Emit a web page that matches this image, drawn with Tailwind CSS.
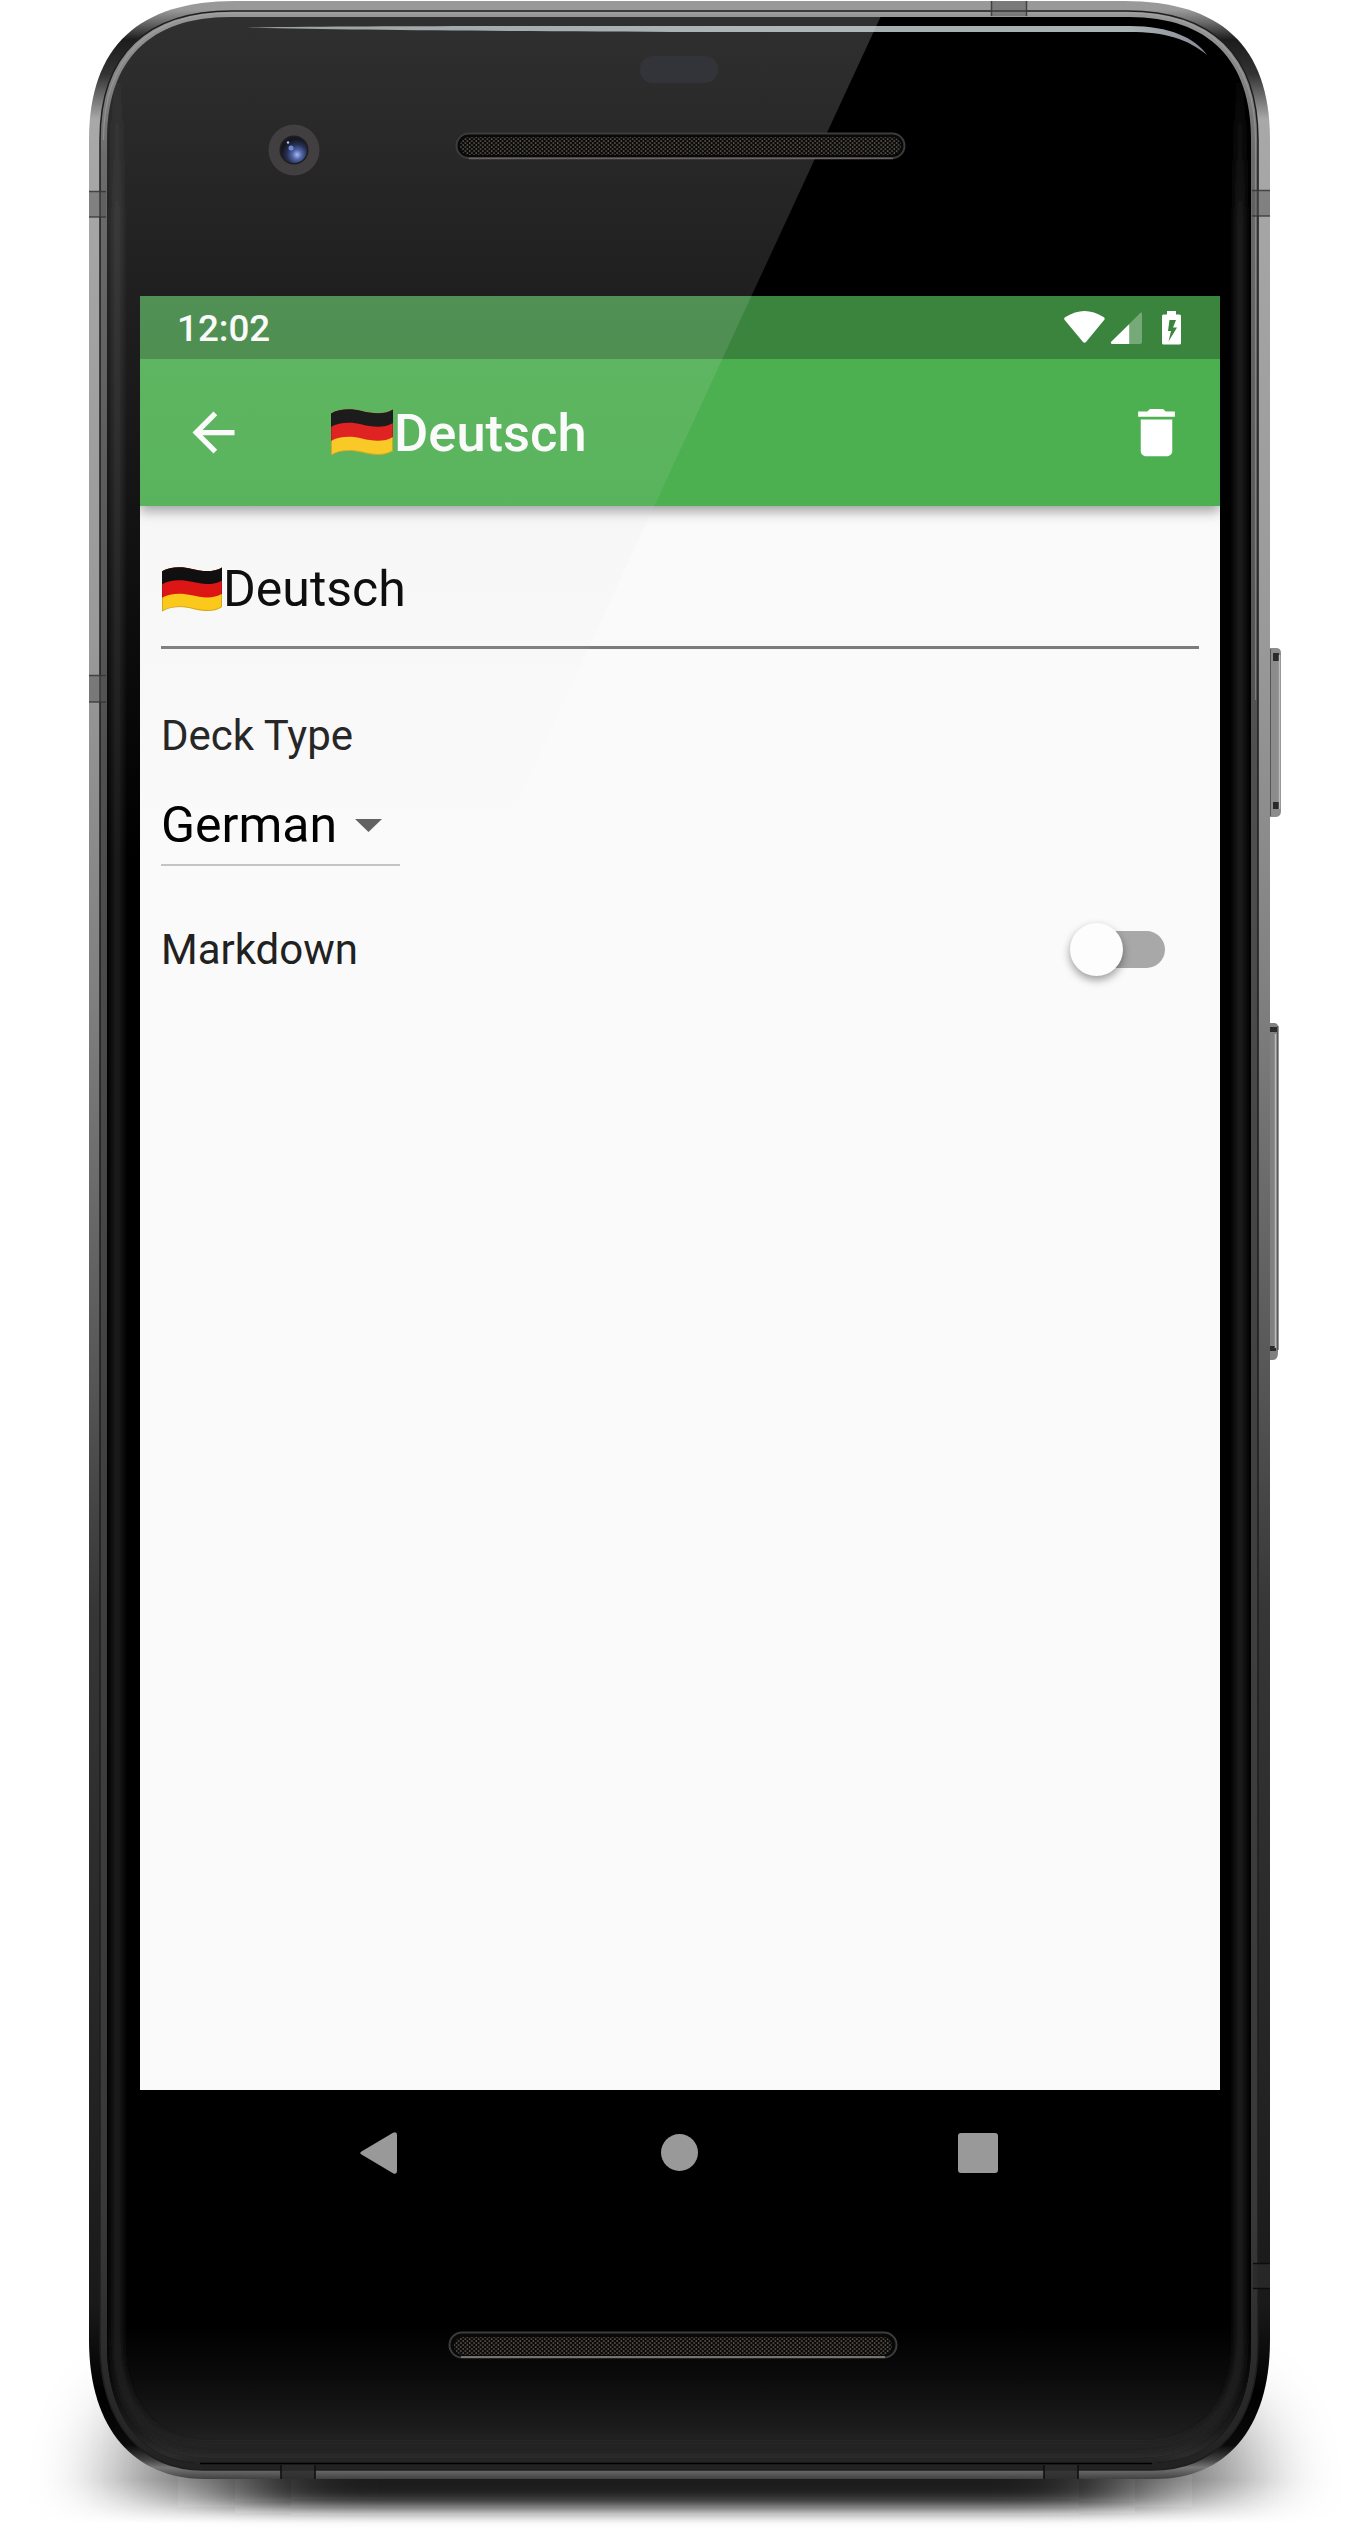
<!DOCTYPE html>
<html lang="en">
<head>
<meta charset="utf-8">
<title>Deck settings</title>
<script src="https://cdn.jsdelivr.net/npm/@tailwindcss/browser@4"></script>
</head>
<body class="bg-white">
<div class="relative w-[1370px] h-[2534px] overflow-hidden font-['Roboto',sans-serif]">

  <!-- Phone body -->
  <svg class="absolute inset-0" width="1370" height="2534" viewBox="0 0 1370 2534" fill="none">
    <defs>
      <linearGradient id="metal" gradientUnits="userSpaceOnUse" x1="0" y1="0" x2="0" y2="2480">
        <stop offset="0" stop-color="#999"/><stop offset=".004" stop-color="#999"/><stop offset=".009" stop-color="#6a6a6a"/>
        <stop offset=".016" stop-color="#1c1c1c"/><stop offset=".03" stop-color="#333"/><stop offset=".048" stop-color="#a8a8a8"/>
        <stop offset=".26" stop-color="#999"/><stop offset=".4" stop-color="#808080"/><stop offset=".56" stop-color="#555"/>
        <stop offset=".65" stop-color="#363636"/><stop offset=".8" stop-color="#282828"/><stop offset=".93" stop-color="#191919"/>
        <stop offset=".965" stop-color="#000"/><stop offset=".986" stop-color="#0a0a0a"/><stop offset=".992" stop-color="#444"/>
        <stop offset=".995" stop-color="#777"/><stop offset="1" stop-color="#3c3c3c"/>
      </linearGradient>
      <linearGradient id="rim" gradientUnits="userSpaceOnUse" x1="0" y1="10" x2="0" y2="2470">
        <stop offset="0" stop-color="#999"/><stop offset=".06" stop-color="#6c6c6c"/><stop offset=".3" stop-color="#505050"/>
        <stop offset=".6" stop-color="#404040"/><stop offset=".9" stop-color="#383838"/><stop offset="1" stop-color="#222"/>
      </linearGradient>
      <linearGradient id="chin" x1="0" y1="0" x2="0" y2="1">
        <stop offset="0" stop-color="#000"/><stop offset=".35" stop-color="#0a0a0a"/><stop offset=".75" stop-color="#1c1c1c"/>
        <stop offset=".93" stop-color="#2c2c2c"/><stop offset="1" stop-color="#202020"/>
      </linearGradient>
      <linearGradient id="curve" gradientUnits="userSpaceOnUse" x1="0" y1="60" x2="0" y2="2449">
        <stop offset="0" stop-color="#222" stop-opacity="0"/><stop offset=".07" stop-color="#222"/><stop offset="1" stop-color="#242424"/>
      </linearGradient>
      <linearGradient id="fadeout" x1="0" y1="0" x2="0" y2="1">
        <stop offset="0" stop-color="#fff" stop-opacity="0"/><stop offset=".8" stop-color="#fff"/><stop offset="1" stop-color="#fff"/>
      </linearGradient>
      <linearGradient id="gleam" x1="0" y1="0" x2="1" y2="0">
        <stop offset="0" stop-color="#8a9494"/><stop offset=".5" stop-color="#a3abad"/><stop offset=".92" stop-color="#a8b3b3"/><stop offset="1" stop-color="#889"/>
      </linearGradient>
      <radialGradient id="lens" cx=".62" cy=".68" r=".6">
        <stop offset="0" stop-color="#a9b8f0"/><stop offset=".3" stop-color="#5367a8"/><stop offset=".65" stop-color="#263052"/><stop offset="1" stop-color="#15171f"/>
      </radialGradient>
      <pattern id="mesh" width="4.4" height="4" patternUnits="userSpaceOnUse">
        <rect width="4.4" height="4" fill="#0c0b09"/><rect x=".4" y=".3" width="1.4" height="1.5" fill="#6a665c"/><rect x="2.6" y="2.3" width="1.4" height="1.5" fill="#6a665c"/>
      </pattern>
      <filter id="ground" filterUnits="userSpaceOnUse" x="-200" y="2200" width="1800" height="400"><feGaussianBlur stdDeviation="60 9"/></filter>
      <filter id="haze" filterUnits="userSpaceOnUse" x="-200" y="2100" width="1800" height="600"><feGaussianBlur stdDeviation="38 42"/></filter>
      <filter id="soft"><feGaussianBlur stdDeviation="3.5"/></filter>
      <clipPath id="glass"><path d="M107 140C107 60 150 17 230 17H1129C1209 17 1251 60 1251 140V2345C1251 2425 1208 2463 1150 2463H200C150 2463 107 2425 107 2345Z"/></clipPath>
    </defs>

    <rect x="105" y="2410" width="1160" height="150" rx="60" fill="#000" opacity=".38" filter="url(#haze)"/>
    <rect x="0" y="2480" width="1370" height="54" fill="url(#fadeout)"/>
    <rect x="235" y="2400" width="900" height="107" fill="#1c1c1c" filter="url(#ground)"/>

    <g>
      <path d="M1268 648h8q5 0 5 5v158q0 6-6 6h-7z" fill="#8c8c8c"/><path d="M1273 653h6v8h-6zM1273 802h6v7h-6z" fill="#2a2a2a"/><path d="M1279.500 655v154" stroke="#bbb" stroke-width="1.500"/><path d="M1270 649v167" stroke="#555" stroke-width="2"/>
      <path d="M1267 1023h7q4 0 4 4v325q0 8-5 8h-6z" fill="#808080"/><path d="M1269 1027h8v5h-8zM1269 1346h7v5h-7z" fill="#2a2a2a"/><path d="M1275.500 1034v314" stroke="#bbb" stroke-width="1.500"/><path d="M1278 1026v324" stroke="#333" stroke-width="1"/>
    </g>

    <path d="M89 140C89 45 140 1 235 1H1124C1220 1 1270 45 1270 140V2340C1270 2430 1225 2479 1155 2479H205C135 2479 89 2430 89 2340Z" fill="url(#metal)"/>
    <path d="M100 140C100 54 147 11 232 11H1127C1211 11 1258 54 1258 140V2343C1258 2427 1214 2470 1152 2470H203C145 2470 100 2427 100 2343Z" fill="url(#rim)" stroke="#1e1e1e" stroke-width="1.500"/>
    <path d="M103.500 140C103.500 57 149 13 231 13H1128C1210 13 1255.500 57 1255.500 140V700" stroke="#b0b0b0" stroke-opacity=".45" stroke-width="1.200"/>
    <g clip-path="url(#glass)">
      <rect x="100" y="10" width="1160" height="2460" fill="#000"/>
      <rect x="100" y="2325" width="1160" height="140" fill="url(#chin)"/>
      <path d="M117 60V2340C117 2412 155 2449 210 2449H1140C1200 2449 1240 2412 1240 2340V60" stroke="url(#curve)" stroke-width="9" filter="url(#soft)"/>
    </g>
    <path d="M200 2463.500H1152" stroke="#000" stroke-width="1.500"/>

    <!-- Antenna bands -->
    <path d="M89 191h17v26H89zM1252 190h18v26h-18zM89 675h17v27H89zM991 1h36v15h-36z" fill="#555" fill-opacity=".45"/>
    <path d="M89 191.500h17M89 217h17M1252 190.500h18M1252 216h18M89 675.500h17M89 702h17M991.500 1v15M1026.500 1v15" stroke="#333" stroke-width="1.500" stroke-opacity=".8"/>
    <path d="M1253 2263h17v26h-17zM281 2465h34v14h-34zM1044 2465h34v14h-34z" fill="#2a2a2a" fill-opacity=".8"/>
    <path d="M1253 2263.500h17M1253 2288.500h17M281 2465v14M315 2465v14M1044 2465v14M1078 2465v14" stroke="#0c0c0c" stroke-width="1.500"/>
    <!-- Edge gleam along the top -->
    <path d="M247 27.500C350 26 500 26 700 26H1130C1170 26 1195 38 1207 55C1188 39 1165 32 1130 32H700C500 31 350 30 247 27.500Z" fill="url(#gleam)"/>
  </svg>

  <!-- Screen -->
  <main class="ml-[140px] pt-[296px] w-[1220px] relative">
    <div class="w-[1080px] h-[1794px] bg-[#fafafa] flex flex-col">
      <div class="h-[63px] shrink-0 bg-[#3b843e] flex items-center justify-between pl-[37px] pr-[39px] text-white">
        <span class="text-[36.75px] leading-none font-medium pt-[4px]">12:02</span>
        <svg width="117" height="34" viewBox="0 0 117 34" fill="#fff">
          <path d="M.3 8.500Q-.2 7 1.500 6Q20.500-6 39.500 6Q41.200 7 40.500 8.500L22 31Q20.500 32.600 19 31Z"/>
          <path d="M47.500 33Q46 31.500 48 30L75.500 2.800Q78-.3 78 3.500V31Q78 33 76 33Z" fill-opacity=".3"/>
          <path d="M65.200 13.200V33H48Q46 32 47.500 30.500Z"/>
          <path fill-rule="evenodd" d="M103 0H112V3.500H115.500Q117 3.500 117 5V32Q117 33.600 115.500 33.600H99.500Q98 33.600 98 32V5Q98 3.500 99.500 3.500H103ZM105.500 9L104 20H107L104.500 30.500L113 16.500H109L112 9Z"/>
        </svg>
      </div>
      <header class="relative h-[147px] shrink-0 bg-[#4db050] shadow-[0_5px_12px_rgba(0,0,0,0.38)] [clip-path:inset(0_0_-40px_0)] flex items-center pl-[42px] pr-[32px] text-white">
        <svg width="63" height="63" viewBox="0 0 24 24" fill="currentColor"><path d="M20 11H7.830l5.590-5.590L12 4l-8 8 8 8 1.410-1.410L7.830 13H20v-2z"/></svg>
        <h1 class="flex items-center ml-[86px] text-[52.5px] leading-none font-medium">
          <svg class="mr-px" width="62" height="47" viewBox="0 0 62 47"><path d="M0 4.500C8-.5 21-.5 31 2S53 6 62 .5V42C53 48 41 46 31 43.500S8 41 0 46.500Z" fill="#fdc812"/><path d="M0 4.500C8-.5 21-.5 31 2S53 6 62 .5V28C53 33.500 41 32 31 29.500S8 27 0 32Z" fill="#e00c0c"/><path d="M0 4.500C8-.5 21-.5 31 2S53 6 62 .5V14C53 19.500 41 18 31 15.500S8 13 0 18Z" fill="#040404"/><path d="M.5 5V46C8 41 21 40.500 31 43S53 47.500 61.500 41.500V1" fill="none" stroke="#000" stroke-opacity=".18"/></svg>
          <span class="pt-[2px]">Deutsch</span>
        </h1>
        <svg class="ml-auto" width="63" height="63" viewBox="0 0 24 24" fill="currentColor"><path d="M6 19c0 1.100.9 2 2 2h8c1.100 0 2-.9 2-2V7H6v12zM19 4h-3.500l-1-1h-5l-1 1H5v2h14V4z"/></svg>
      </header>
      <section class="px-[21px] flex flex-col items-start">
        <div class="mt-[26px] h-[117px] w-full flex items-center border-b-[3px] border-[#7c7c7c] text-[50px] leading-none text-black">
          <svg class="ml-[1px]" width="60" height="45" viewBox="0 0 62 47" preserveAspectRatio="none"><path d="M0 4.500C8-.5 21-.5 31 2S53 6 62 .5V42C53 48 41 46 31 43.500S8 41 0 46.500Z" fill="#fdc70e"/><path d="M0 4.500C8-.5 21-.5 31 2S53 6 62 .5V28C53 33.500 41 32 31 29.500S8 27 0 32Z" fill="#de0606"/><path d="M0 4.500C8-.5 21-.5 31 2S53 6 62 .5V14C53 19.500 41 18 31 15.500S8 13 0 18Z" fill="#000"/><path d="M.5 5V46C8 41 21 40.500 31 43S53 47.500 61.500 41.500V1" fill="none" stroke="#000" stroke-opacity=".18"/></svg>
          <span class="ml-px">Deutsch</span>
        </div>
        <label class="mt-[57px] h-[60px] flex items-center text-[42px] leading-none text-[#212121]">Deck Type</label>
        <div class="mt-[20px] w-[239px] h-[80px] flex items-center border-b-2 border-[#c4c4c4] text-[50px] leading-none text-black">
          <span>German</span>
          <svg class="ml-auto mr-[18px]" width="27" height="13" viewBox="0 0 27 13"><path d="M0 0H27L13.500 13Z" fill="#616161"/></svg>
        </div>
        <div class="mt-[43px] h-[80px] w-full flex items-center justify-between pr-[34px]">
          <span class="pt-[2px] text-[42px] leading-none text-[#212121]">Markdown</span>
          <span class="w-[95px] h-[53px] flex items-center relative">
            <span class="ml-[9px] w-full h-[37px] rounded-full bg-[#a8a8a8]"></span>
            <span class="absolute left-0 top-0 size-[53px] rounded-full bg-[#fdfdfd] shadow-[0_4px_9px_rgba(0,0,0,0.38)]"></span>
          </span>
        </div>
      </section>
    </div>
    <nav class="w-[1080px] h-[126px] flex items-center justify-between pl-[220px] pr-[222px]">
      <svg width="37" height="42" viewBox="0 0 37 42" fill="#999"><path d="M1.500 19.500L33 .8Q37-1 37 3V39Q37 43 33 41.200L1.500 22.500Q-1 21 1.500 19.500Z"/></svg>
      <span class="ml-[3px] mb-px size-[37px] rounded-full bg-[#999]"></span>
      <span class="size-[40px] rounded-[3px] bg-[#999]"></span>
    </nav>
  </main>

  <!-- Glass reflection and front hardware -->
  <svg class="absolute inset-0" width="1370" height="2534" viewBox="0 0 1370 2534" fill="none">
    <defs>
      <linearGradient id="gloss" gradientUnits="userSpaceOnUse" x1="0" y1="0" x2="0" y2="860">
        <stop offset="0" stop-color="#d8d8d8" stop-opacity=".225"/><stop offset=".34" stop-color="#d8d8d8" stop-opacity=".145"/>
        <stop offset=".59" stop-color="#d8d8d8" stop-opacity=".09"/><stop offset="1" stop-color="#d8d8d8" stop-opacity="0"/>
      </linearGradient>
    </defs>
    <path clip-path="url(#glass)" d="M107 3H887L490 861H107Z" fill="url(#gloss)"/>
    <rect x="640" y="56" width="78" height="27" rx="13" fill="#33343a"/>
    <circle cx="294" cy="150" r="25.500" fill="#423f40"/>
    <circle cx="294" cy="150" r="14.500" fill="#1d1d22"/>
    <circle cx="294" cy="150" r="13" fill="url(#lens)"/>
    <circle cx="291" cy="148" r="2.500" fill="#6f88d8"/><circle cx="288" cy="142.500" r="1.200" fill="#b8c4f0"/>
    <rect x="456.500" y="133.500" width="448" height="24.500" rx="12.250" fill="#090909" stroke="#3c3c3c" stroke-width="2"/>
    <rect x="460" y="137" width="441" height="18" rx="9" fill="url(#mesh)"/>
    <path d="M469 158.500H893" stroke="#67645f" stroke-width="1.500"/>
    <rect x="449.500" y="2332.500" width="447" height="25" rx="12.500" fill="#090909" stroke="#3c3c3c" stroke-width="2"/>
    <rect x="454" y="2337" width="438" height="18" rx="9" fill="url(#mesh)"/>
    <path d="M461 2357H885" stroke="#75726c" stroke-width="2"/>
  </svg>
</div>
</body>
</html>
